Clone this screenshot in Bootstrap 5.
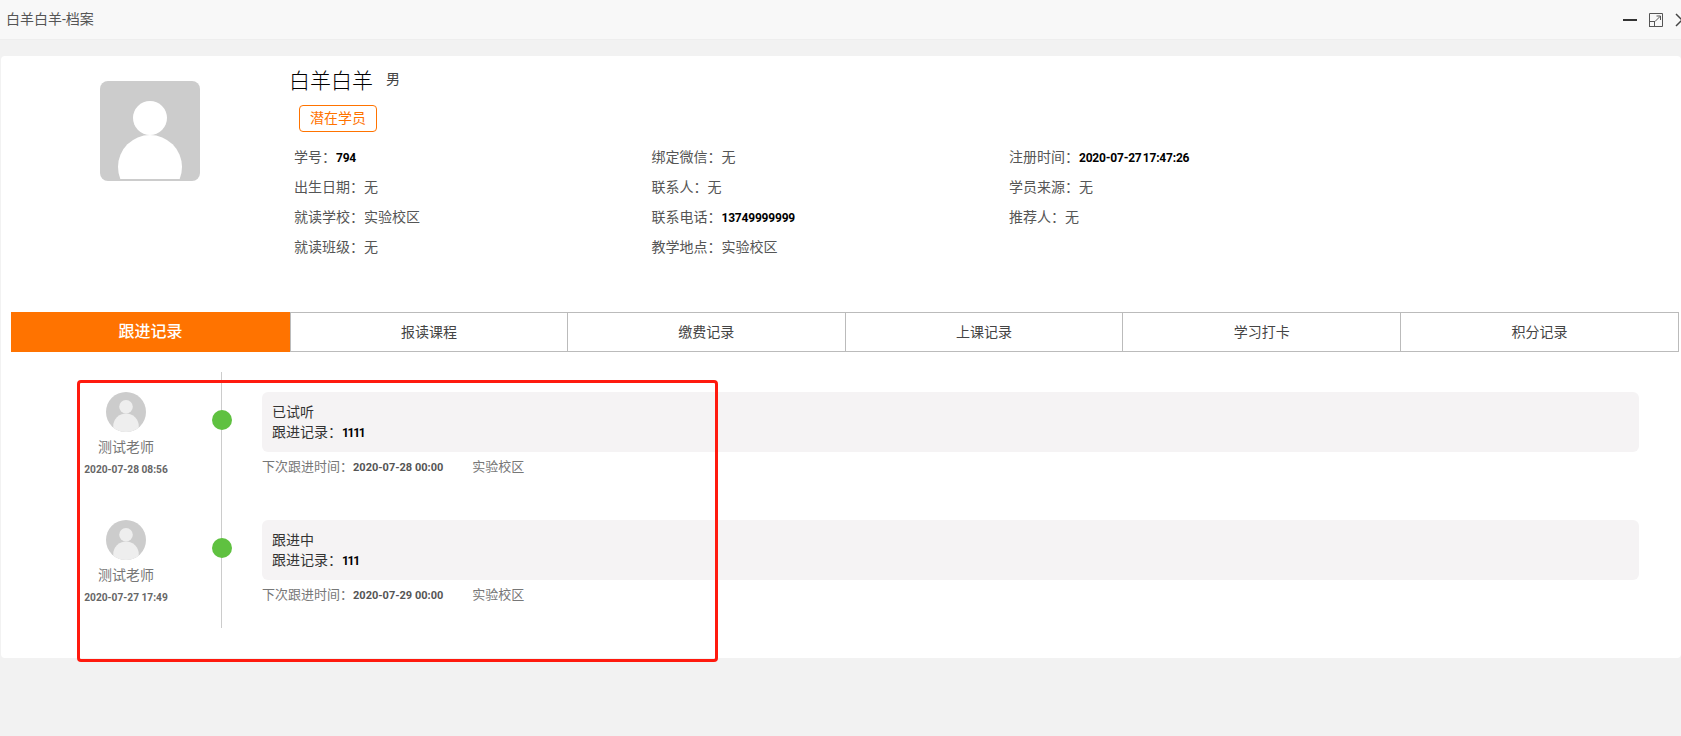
<!DOCTYPE html>
<html lang="zh-CN">
<head>
<meta charset="utf-8">
<title>白羊白羊-档案</title>
<link rel="stylesheet" href="https://cdn.jsdelivr.net/npm/bootstrap@5.3.0/dist/css/bootstrap.min.css">
<style>
html,body{height:100%;overflow:hidden}
body{background:#f2f2f2;font-family:Roboto,"Noto Sans CJK SC",sans-serif;font-size:14px;color:#555}
.titlebar{height:40px;background:#f8f8f8;border-bottom:1px solid #eee;padding-left:6px;font-size:14px;color:#555;overflow:hidden}
.win-icons{gap:12px;margin-right:-8px}
.panel{position:relative;margin:16px 0 0 1px;height:602px;background:#fff;border-radius:4px}
.profile{height:256px}
.bigavatar{width:100px;height:100px;margin:25px 0 0 99px;flex:none;display:block}
.info{margin-left:91px}
.stuname{height:30px;margin:10px 0 0 -2px;line-height:30px;font-size:21px;font-weight:300;color:#000;white-space:nowrap}
.stusex{font-size:14px;font-weight:400;color:#444;margin-left:13px;position:relative;top:-4px}
.tagline{display:inline-block;margin:9px 0 0 8px;height:27px;line-height:25px;padding:0 10px;border:1px solid #ff7300;border-radius:4px;color:#ff7300;font-size:14px}
.facts{margin:10px 0 0 3px}
.factcol{width:357.5px}
.fact{height:30px;line-height:30px;white-space:nowrap}
.fact b,.recline b{font-weight:700;color:#000;font-size:12px}
.fact b{word-spacing:-1.500px;letter-spacing:-.2px}
.recline b{letter-spacing:-1.300px}
.tabbar{margin-left:10px;width:1668px;height:40px}
.tabcell{flex:0 0 277.800px;border:1px solid #bbb;border-left-width:0;font-size:14px;color:#444;line-height:38px;text-align:center}
.tabcell.onfirst{border:0;background:#ff7300;color:#fff;font-size:16px;font-weight:500;line-height:40px;flex:0 0 279px}
.tabcell.onsecond{border-left-width:1px}
.timeline{position:relative;padding-top:20px}
.railline{position:absolute;left:220px;top:20px;height:256px;width:1px;background:#ccc}
.trow{height:128px;padding-top:20px}
.who{width:106px;margin-left:72px;flex:none;text-align:center}
.smallavatar{width:40px;height:40px;display:block;margin:0 auto}
.teacher{margin-top:5px;height:20px;line-height:20px;color:#777;font-size:14px;white-space:nowrap}
.stamp{margin-top:5px;line-height:16px;font-size:10.200px;font-weight:700;color:#666;white-space:nowrap}
.dotcol{width:83px;flex:none;position:relative}
.greendot{position:absolute;left:33px;top:18px;width:20px;height:20px;border-radius:50%;background:#5fc140}
.recwrap{width:1377px;flex:none}
.recbox{height:60px;background:#f5f3f4;border-radius:6px;padding:10px 10px;color:#333}
.recline{height:20px;line-height:20px}
.nextline{margin-top:5px;height:20px;line-height:20px;color:#777;font-size:13px}
.nextline b{font-weight:700;color:#555;font-size:11px}
.nextline span{margin-left:29px}
.redmark{position:absolute;left:76px;top:324px;width:641px;height:282px;border:3px solid #ff1a0e;border-radius:4px;pointer-events:none}
</style>
</head>
<body>
<div class="titlebar d-flex align-items-center justify-content-between">
  <span>白羊白羊-档案</span>
  <div class="win-icons d-flex align-items-center">
    <svg width="14" height="14" viewBox="0 0 14 14"><rect x="0" y="6" width="14" height="2" fill="#333"/></svg>
    <svg width="14" height="14" viewBox="0 0 14 14" fill="none" stroke="#555" stroke-width="1"><path d="M.5 8V.5H13.500V13.500H5.500"/><rect x=".5" y="8.500" width="5" height="5"/><path d="M6 8.500L11 3.500M7.500 3H11.500V7"/></svg>
    <svg width="14" height="14" viewBox="0 0 14 14" fill="none" stroke="#444" stroke-width="1.500"><path d="M1 1l12 12M13 1L1 13"/></svg>
  </div>
</div>
<div class="panel">
  <div class="profile d-flex">
    <svg class="bigavatar" viewBox="0 0 100 100"><defs><clipPath id="bigclip"><rect x="0" y="0" width="100" height="98"/></clipPath></defs><rect width="100" height="100" rx="8" fill="#ccc"/><circle cx="50" cy="37" r="17" fill="#fff"/><circle cx="50" cy="86" r="32" fill="#fff" clip-path="url(#bigclip)"/></svg>
    <div class="info flex-grow-1">
      <div class="stuname">白羊白羊<span class="stusex">男</span></div>
      <div><span class="tagline">潜在学员</span></div>
      <div class="facts d-flex">
        <div class="factcol">
          <div class="fact">学号：<b>794</b></div>
          <div class="fact">出生日期：无</div>
          <div class="fact">就读学校：实验校区</div>
          <div class="fact">就读班级：无</div>
        </div>
        <div class="factcol">
          <div class="fact">绑定微信：无</div>
          <div class="fact">联系人：无</div>
          <div class="fact">联系电话：<b>13749999999</b></div>
          <div class="fact">教学地点：实验校区</div>
        </div>
        <div class="factcol">
          <div class="fact">注册时间：<b>2020-07-27 17:47:26</b></div>
          <div class="fact">学员来源：无</div>
          <div class="fact">推荐人：无</div>
        </div>
      </div>
    </div>
  </div>
  <div class="tabbar d-flex">
    <div class="tabcell onfirst">跟进记录</div>
    <div class="tabcell onsecond">报读课程</div>
    <div class="tabcell">缴费记录</div>
    <div class="tabcell">上课记录</div>
    <div class="tabcell">学习打卡</div>
    <div class="tabcell">积分记录</div>
  </div>
  <div class="timeline">
    <div class="railline"></div>
    <div class="trow d-flex">
      <div class="who">
        <svg class="smallavatar" viewBox="0 0 100 100"><defs><clipPath id="c1"><circle cx="50" cy="50" r="50"/></clipPath></defs><circle cx="50" cy="50" r="50" fill="#ccc"/><g clip-path="url(#c1)" fill="#eee"><circle cx="50" cy="37" r="17"/><circle cx="50" cy="86" r="32"/></g></svg>
        <div class="teacher">测试老师</div>
        <div class="stamp">2020-07-28 08:56</div>
      </div>
      <div class="dotcol"><div class="greendot"></div></div>
      <div class="recwrap">
        <div class="recbox">
          <div class="recline">已试听</div>
          <div class="recline">跟进记录：<b>1111</b></div>
        </div>
        <div class="nextline">下次跟进时间：<b>2020-07-28 00:00</b><span>实验校区</span></div>
      </div>
    </div>
    <div class="trow d-flex">
      <div class="who">
        <svg class="smallavatar" viewBox="0 0 100 100"><defs><clipPath id="c2"><circle cx="50" cy="50" r="50"/></clipPath></defs><circle cx="50" cy="50" r="50" fill="#ccc"/><g clip-path="url(#c2)" fill="#eee"><circle cx="50" cy="37" r="17"/><circle cx="50" cy="86" r="32"/></g></svg>
        <div class="teacher">测试老师</div>
        <div class="stamp">2020-07-27 17:49</div>
      </div>
      <div class="dotcol"><div class="greendot"></div></div>
      <div class="recwrap">
        <div class="recbox">
          <div class="recline">跟进中</div>
          <div class="recline">跟进记录：<b>111</b></div>
        </div>
        <div class="nextline">下次跟进时间：<b>2020-07-29 00:00</b><span>实验校区</span></div>
      </div>
    </div>
  </div>
  <div class="redmark"></div>
</div>
<script src="https://cdn.jsdelivr.net/npm/bootstrap@5.3.0/dist/js/bootstrap.bundle.min.js"></script>
</body>
</html>
